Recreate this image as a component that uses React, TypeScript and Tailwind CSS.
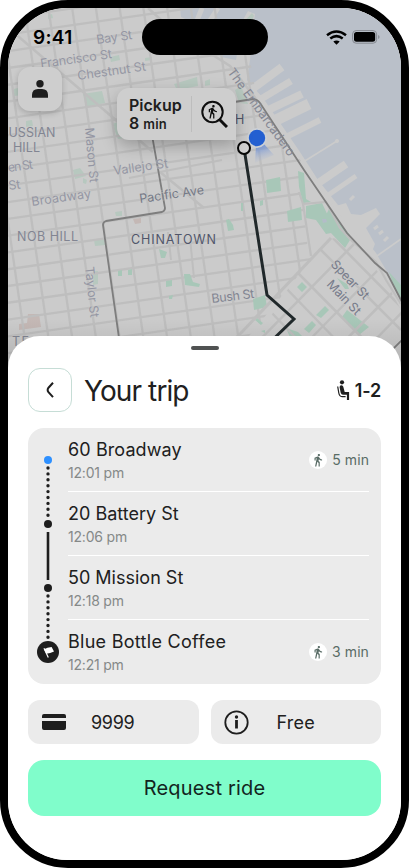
import React from "react";
import { MdDirectionsWalk } from "react-icons/md";

const steps = (from: number, to: number, size: number) =>
  Array.from({ length: Math.floor((to - from) / size) + 1 }, (_, i) => from + i * size);

const COLUMNS = steps(-141, 260, 23.5);
const ROWS = steps(-249, 150, 16.6);

type Label = { t: string; x: number; y: number; r: number; w: number; c?: string };
const FAINT = "#9496a3";
const MID = "#828592";
const DARK = "#50566a";
const LABELS: Label[] = [
  { t: "Bay St", x: 97, y: 44, r: -8, w: 36, c: FAINT },
  { t: "Francisco St", x: 41, y: 68, r: -8, w: 72, c: FAINT },
  { t: "Chestnut St", x: 78, y: 80, r: -8, w: 69, c: FAINT },
  { t: "USSIAN", x: 8.5, y: 137, r: 0, w: 47, c: MID },
  { t: "HILL", x: 13, y: 152, r: 0, w: 27, c: MID },
  { t: "en St", x: 8.5, y: 172, r: -8, w: 25, c: FAINT },
  { t: "St", x: 9, y: 190, r: -8, w: 12, c: FAINT },
  { t: "Mason St", x: 85, y: 128, r: 85, w: 55, c: FAINT },
  { t: "Vallejo St", x: 114, y: 175, r: -8, w: 55, c: FAINT },
  { t: "Broadway", x: 32, y: 206, r: -8, w: 60, c: FAINT },
  { t: "Pacific Ave", x: 140, y: 203, r: -8, w: 65, c: "#747986" },
  { t: "NOB HILL", x: 17, y: 241, r: 0, w: 61, c: MID },
  { t: "CHINATOWN", x: 131, y: 244, r: 0, w: 85, c: DARK },
  { t: "Taylor St", x: 85, y: 267, r: 84, w: 51, c: FAINT },
  { t: "Bush St", x: 212, y: 303, r: -7, w: 43, c: MID },
  { t: "Spear St", x: 330, y: 265, r: 46, w: 49, c: "#777b8a" },
  { t: "Main St", x: 326, y: 285, r: 46, w: 43, c: "#777b8a" },
  { t: "TE", x: 12, y: 346, r: 0, w: 17, c: MID },
  { t: "H", x: 235, y: 124, r: 0, w: 9, c: DARK },
];

function CityMap() {
  return (
    <svg className="block h-[370px] w-[393px]" viewBox="8 8 393 370">
      <defs>
        <clipPath id="north">
          <path d="M8 8H216L250 60 257 100 306 168 300 190 304 212 308 250 314 256 215 378H8Z" />
        </clipPath>
        <clipPath id="south">
          <path d="M331 238 300 270 232 378H401V310L385 280 350 240Z" />
        </clipPath>
        <linearGradient id="beam" x1="0" y1="0" x2="0.3" y2="1">
          <stop offset="0" stopColor="#4f7bd4" />
          <stop offset="1" stopColor="#a9b8d6" stopOpacity="0" />
        </linearGradient>
        <linearGradient id="shade" x1="0" y1="0" x2="0" y2="1">
          <stop offset="0.84" stopColor="#000" stopOpacity="0" />
          <stop offset="1" stopColor="#000" stopOpacity="0.15" />
        </linearGradient>
      </defs>
      <rect x="8" y="8" width="393" height="370" fill="#cbcbcb" />

      {/* bay */}
      <path
        d="M180 8H401V291L386 270 376 253 350 220 318 180 300 152 263 98 247 80 250 60 252 38 255 14 248 11 243 20 236 60 221 57 200 26 181 17Z"
        fill="#bac0c9"
      />
      {/* piers */}
      <g stroke="#cbcbcb" fill="none">
        <path d="M251 90 282 67" strokeWidth="8" />
        <path d="M256 102 291 81" strokeWidth="7" />
        <path d="M264 112 302 94" strokeWidth="8" />
        <path d="M272 122 309 104" strokeWidth="11" />
        <path d="M284 138 320 120" strokeWidth="6" />
        <path d="M300 164 337 141M377 256 401 239" strokeWidth="1.600" />
        <path d="M314 186 346 164" strokeWidth="8" />
        <path d="M324 198 356 176" strokeWidth="5" />
        <path d="M350 200 354 196M374 229 378 226M379 234 383 231M384 241 388 237" strokeWidth="3" />
        <path d="M218 8 209 22M202 8 194 28" strokeWidth="5" />
      </g>
      <circle cx="337" cy="141" r="2" fill="#cbcbcb" />
      <path d="M325 196 336 206 346 203 351 214 361 215 376 208 380 214 366 228 375 244 371 254Z" fill="#cbcbcb" />

      {/* parks */}
      <g fill="#b7c8bf">
        <path d="M83 94 102 91 105 103 86 107ZM174 84 197 77 198 86 177 90ZM110 57 119 55 120 60 111 62ZM145 58l7-1v3l-7 1ZM26 121l6-1 1 6-7 1ZM73 170 80 168 86 176 75 179ZM83 178 87 180 86 184 83 183ZM94 240 104 238 105 245 95 246ZM93 271 98 271 98 284 93 285ZM115 212 122 211 122 216 116 216ZM14 89l8-2v8l-8 1ZM48 15l4-1 1 4-5 1ZM240 26l12-13 2 3-6 13Z" />
        <path d="M112 124l24-8 10 18-28 5ZM235 90l6-4 7 18-9-1ZM205 81l5-2v6l-5 1Z" />
      </g>
      <path d="M28 314h11l2 13-22 3v-6l8-1ZM133 219l8-1v5l-6 1Z" fill="#c4b8b5" />

      {/* street grid running uphill from the waterfront */}
      <g clipPath="url(#north)">
        <g transform="translate(103 222) rotate(-8.2)" stroke="#bebebe" strokeWidth="2.3">
          {COLUMNS.map((x) => (
            <line key={x} x1={x} x2={x} y1="-250" y2="190" />
          ))}
          {ROWS.map((y) => (
            <line key={y} x1="-150" x2="270" y1={y} y2={y} />
          ))}
        </g>
        <path d="M12 31 153 152M160 172 204 208M148 8 170 28 230 66 257 100" stroke="#bebebe" strokeWidth="2.5" fill="none" />
        <path d="M129 178 222 160M168 232l3 28M190 238l4 40" stroke="#bebebe" strokeWidth="2" fill="none" />
      </g>

      <g fill="#a8c7b8">
        <path d="M118 271l4-1v6h-4ZM128 270l4-1v6h-4ZM159 249l8 3-2 6h-4ZM184 274l6 0 3 8 7 2-1 3-14-2ZM166 281l6-1v6l-6 1ZM169 296l4-1-1 4h-3ZM266 180l14-3 1 14-14 2ZM241 203l2 0v8h-2ZM260 201l3-1v5l-3 1ZM226 220l3-1 4 6 1 5-6 1ZM287 211 301 207 302 220 288 222ZM298 171l6 2 2 26 5 3-8 1-4-16ZM306 206 322 203 329 218 350 240 345 248 331 233 326 234 316 220 306 218ZM329 209 350 235 346 236 326 215ZM253 299 265 295 267 307 254 310ZM297 287l5-5 5 5-5 5ZM342 317 347 310 369 327 359 335ZM316 315l9-9 4 4-8 8ZM304 329l8-8 4 4-7 8ZM286 328l12 4 4 4-10 6ZM255 320l2-2 6 5-2 2ZM337 278l10 6 2 5-4 0ZM389 272 401 285V300L394 287ZM261 331l4-1 0 3Z" />
      </g>
      <path d="M322 219l4 0 1 3-4 1Z" fill="#b3bcc8" />

      {/* diagonal streets south of Market */}
      <g clipPath="url(#south)" stroke="#bebebe" strokeWidth="2.5" fill="none">
        <path d="M269 310 322 365M283 285 370 375M297 272 392 368M320 249 401 330M333 238 412 318M241 325 282 367" />
        <path d="M354 244 240 360M378 270 280 370M395 290 316 370M408 306 340 376" />
      </g>
      <path d="M331 238 222 353" stroke="#bebebe" strokeWidth="3" />
      <path d="M299 192 303 204 311 256M303 204 326 202 340 228 352 241 376 262 386 280 401 304" stroke="#bebebe" strokeWidth="2.200" fill="none" />

      {/* muted transit lines */}
      <path
        d="M150 124 165 208Q165 211 162 212L106 221Q103 222 103 225L120 345M234 102 253 99Q257 99 260 103L304 170 347 233 375 263 387 273 402 302V340L376 366"
        fill="none"
        stroke="#7e7e7e"
        strokeWidth="1.800"
      />

      <g fontFamily="Inter, 'Liberation Sans', sans-serif" fontSize="12.5">
        {LABELS.map((l) => (
          <text
            key={l.t + l.y}
            transform={`translate(${l.x} ${l.y}) rotate(${l.r})`}
            textLength={l.w}
            fill={l.c}
            stroke="#cbcbcb"
            strokeOpacity="0.5"
            strokeWidth="1.4"
            paintOrder="stroke"
          >
            {l.t}
          </text>
        ))}
        <text transform="translate(227 72) rotate(54)" textLength="105" fill="#858894">
          The Embarcadero
        </text>
      </g>

      <rect x="8" y="8" width="393" height="370" fill="url(#shade)" />

      {/* selected route */}
      <path d="M244 148 267 295 294 319 258 354" fill="none" stroke="#20282a" strokeWidth="3" />
      <path d="M256 146 255 163 274 155 263 143Z" fill="url(#beam)" />
      <circle cx="257" cy="138" r="10" fill="#ccd0d5" />
      <circle cx="257" cy="138" r="8.200" fill="#235fd1" />
      <circle cx="244" cy="148" r="6" fill="#d2d2d2" stroke="#080808" strokeWidth="2" />
    </svg>
  );
}

function StatusBar() {
  return (
    <div className="absolute inset-x-0 top-0 flex h-[58px] items-center justify-between pr-[21px] pl-[25px]">
      <span className="text-[19px] leading-none font-semibold tracking-[0.3px] text-black">9:41</span>
      <div className="absolute top-[11px] left-[134px] h-9 w-[126px] rounded-full bg-black" />
      <div className="flex items-center gap-[5px]">
        <svg width="21" height="15" viewBox="0 0 21 15" fill="none" stroke="#000" strokeWidth="2.500">
          <path d="M1 5.200Q10.500-2.300 20 5.200M4.300 8.600Q10.500 3.700 16.700 8.600" />
          <path d="M7.300 11.600Q10.500 9.200 13.700 11.600L10.500 14.800Z" fill="#000" stroke="none" />
        </svg>
        <svg width="28" height="14" viewBox="0 0 28 14">
          <rect x="0.600" y="0.600" width="24" height="12.600" rx="3.500" fill="none" stroke="#858990" />
          <rect x="2" y="2" width="21.200" height="9.800" rx="2.500" />
          <path d="M26.200 4.900v4q1.300-.5 1.300-2t-1.300-2Z" fill="#858990" />
        </svg>
      </div>
    </div>
  );
}

function SeatIcon() {
  return (
    <svg width="13" height="21" viewBox="0 0 13 21" fill="none">
      <circle cx="5" cy="2.300" r="2.100" fill="#1e1e1e" />
      <path
        d="M2.600 7.200Q2.500 5.400 4.300 5.200 5.900 5.100 6.300 6.700L7.700 11.900H12.100V20H9.900V14.800H6Q4.200 14.800 3.700 12.700Z"
        fill="#1e1e1e"
      />
      <path d="M.7 6.500 1.800 13Q2.400 16.600 5 16.600H8.600" stroke="#1e1e1e" strokeWidth="1.200" />
    </svg>
  );
}

type Stop = { name: string; time: string; walk?: string; tracking: string };
const STOPS: Stop[] = [
  { name: "60 Broadway", time: "12:01 pm", walk: "5 min", tracking: "tracking-[0.1px]" },
  { name: "20 Battery St", time: "12:06 pm", tracking: "tracking-[0px]" },
  { name: "50 Mission St", time: "12:18 pm", tracking: "tracking-[0px]" },
  { name: "Blue Bottle Coffee", time: "12:21 pm", walk: "3 min", tracking: "tracking-[0.28px]" },
];

function Timeline() {
  return (
    <svg className="w-10 shrink-0" height="256" viewBox="0 0 40 256">
      <g stroke="#1e1e1e" fill="none">
        <path d="M20 40V90M20 168V212" strokeWidth="3.400" strokeLinecap="round" strokeDasharray="0 5.900" />
        <path d="M20 104V152" strokeWidth="2.600" />
      </g>
      <circle cx="20" cy="32" r="4" fill="#2e90ff" />
      <circle cx="20" cy="96" r="4" fill="#1e1e1e" />
      <circle cx="20" cy="160" r="4" fill="#1e1e1e" />
      <circle cx="20" cy="224" r="11" fill="#1e1e1e" />
      <path d="M16 220.300 20.300 229.600" stroke="#fff" strokeWidth="1.200" />
      <path d="M16 221.200 19.500 219.800 23.600 219 26 223.600 22.200 225.100 18.300 225.700Z" fill="#fff" />
    </svg>
  );
}

function TripCard() {
  return (
    <div className="mt-4 flex h-64 rounded-2xl bg-[#ebebeb] pr-3">
      <Timeline />
      <div className="flex flex-1 flex-col divide-y divide-white">
        {STOPS.map((s) => (
          <div key={s.name} className="flex h-16 items-center justify-between">
            <div className="pt-[1px]">
              <div className={`text-[18px] leading-6 text-[#202020] ${s.tracking}`}>{s.name}</div>
              <div className="mt-[1px] text-[14px] leading-5 tracking-[-0.2px] text-[#858988]">{s.time}</div>
            </div>
            {s.walk && (
              <div className="flex items-center gap-[5px] text-[#596c66]">
                <span className="flex size-[18px] items-center justify-center rounded-full bg-white">
                  <MdDirectionsWalk size={14} />
                </span>
                <span className="text-[14px] leading-5 tracking-[0.1px]">{s.walk}</span>
              </div>
            )}
          </div>
        ))}
      </div>
    </div>
  );
}

export default function App() {
  return (
    <div className="h-[868px] w-[409px] bg-white font-['Inter','Liberation_Sans',sans-serif]">
      <div className="relative h-full overflow-hidden rounded-[68px] border-8 border-black bg-white">
        <div className="h-[328px] overflow-visible">
          <CityMap />
        </div>
        <StatusBar />
        <button className="absolute top-[59px] left-[10px] flex size-11 items-center justify-center rounded-xl bg-[#cecece] shadow-[0_2px_6px_rgba(0,0,0,0.2)]">
          <svg width="16" height="18" viewBox="0 0 16 18" fill="#1e1e1e">
            <circle cx="8" cy="3.700" r="3.700" />
            <path d="M0 17.800V15Q0 9 6 9H10Q16 9 16 15V17.800Z" />
          </svg>
        </button>
        <div className="absolute top-20 left-[109px] flex h-[52px] w-[119px] items-center rounded-xl rounded-br-none bg-[#cecece] pl-3 shadow-[0_6px_16px_rgba(0,0,0,0.25)]">
          <div className="w-[62px] text-[16px] leading-[18px] font-semibold text-[#1e1e1e]">
            <div>Pickup</div>
            <div>
              8 <span className="text-[13px] tracking-[0.2px]">min</span>
            </div>
          </div>
          <div className="h-9 w-px bg-[#bdbdbd]" />
          <div className="relative ml-2 size-7">
            <svg width="28" height="28" viewBox="0 0 28 28" fill="none" stroke="#0e0e0e">
              <circle cx="12.500" cy="12" r="10.200" strokeWidth="2" />
              <path d="M19.500 19.500 27 27" strokeWidth="3" />
            </svg>
            <MdDirectionsWalk size={15} className="absolute top-[4px] left-[5px] text-[#0e0e0e]" />
          </div>
        </div>

        <div className="relative h-[524px] rounded-t-[32px] bg-white px-5 pt-[10px]">
          <div className="mx-auto h-1 w-7 rounded-full bg-[#505252]" />
          <div className="mt-[18px] flex h-11 items-center">
            <button className="flex size-11 items-center justify-center rounded-xl border border-[#c6ddd6]">
              <svg width="8" height="16" viewBox="0 0 8 16" fill="none" stroke="#1e1e1e" strokeWidth="2">
                <path d="M7 .8 2.500 5.700Q.8 7.900 2.500 10.200L7 15.200" />
              </svg>
            </button>
            <h1 className="ml-3 pt-[2px] text-[28px] leading-8 tracking-[-0.9px] text-[#202020]">Your trip</h1>
            <div className="ml-auto flex items-center gap-[5px]">
              <SeatIcon />
              <span className="pt-[2px] text-[18px] leading-6 font-semibold tracking-[-0.2px] text-[#1e1e1e]">1-2</span>
            </div>
          </div>
          <TripCard />
          <div className="mt-4 grid grid-cols-2 gap-3">
            <div className="flex h-11 items-center rounded-xl bg-[#ebebeb] pl-[14px]">
              <svg width="24" height="16" viewBox="0 0 24 16" fill="#1e1e1e">
                <path d="M0 4V2Q0 0 2 0H22Q24 0 24 2V4ZM0 7H24V14Q24 16 22 16H2Q0 16 0 14Z" />
              </svg>
              <span className="ml-[25px] pt-[1px] text-[18px] tracking-[-0.3px] text-[#202020]">9999</span>
            </div>
            <div className="flex h-11 items-center rounded-xl bg-[#ebebeb] pl-[13px]">
              <svg width="25" height="25" viewBox="0 0 25 25" fill="none" stroke="#1e1e1e">
                <circle cx="12.500" cy="12.500" r="11.200" strokeWidth="1.800" />
                <path d="M12.500 10V18.500" strokeWidth="2.800" />
                <circle cx="12.500" cy="7" r="1.700" fill="#1e1e1e" stroke="none" />
              </svg>
              <span className="ml-[28px] pt-[1px] text-[18px] tracking-[0.2px] text-[#202020]">Free</span>
            </div>
          </div>
          <button className="mt-4 flex h-14 w-full items-center justify-center rounded-2xl bg-[#80fdcb] text-[20px] tracking-[0.2px] text-[#12251e]">
            Request ride
          </button>
        </div>
      </div>
    </div>
  );
}
